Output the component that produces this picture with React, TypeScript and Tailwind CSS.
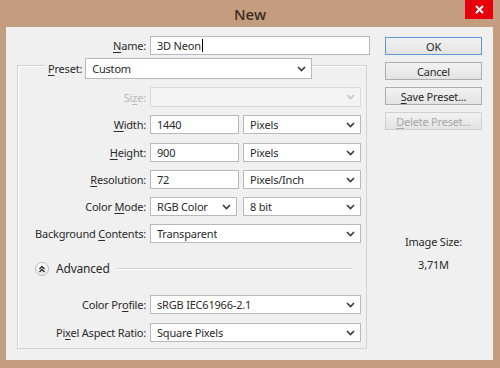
import React from 'react'

const Chevron: React.FC<{ disabled?: boolean }> = ({ disabled }) => (
  <svg width="9" height="6" viewBox="0 0 9 6" className="shrink-0">
    <polyline
      points="1,1 4.5,4.5 8,1"
      fill="none"
      stroke={disabled ? '#c4c4c4' : '#3a3a3a'}
      strokeWidth="1.6"
    />
  </svg>
)

const Select: React.FC<{ value?: string; w: string; h?: string; disabled?: boolean }> = ({ value, w, h = 'h-[19px]', disabled }) => (
  <div
    className={`${w} ${h} flex items-center justify-between pl-[6px] pr-[5px] border ${
      disabled ? 'border-[#d9d9d9] bg-[#f3f3f3]' : 'border-[#b9b9b9] bg-white'
    }`}
  >
    <span className="truncate leading-[15px]">{value}</span>
    <Chevron disabled={disabled} />
  </div>
)

const TextBox: React.FC<{ value: string; w: string; caret?: boolean }> = ({ value, w, caret }) => (
  <div className={`${w} h-[19px] flex items-center pl-[6px] border border-[#b9b9b9] bg-white`}>
    <span className="leading-[15px]">{value}</span>
    {caret && <span className="ml-[1px] w-px h-[13px] bg-black" />}
  </div>
)

const Label: React.FC<{ children: React.ReactNode; w?: string; dim?: boolean }> = ({ children, w = 'w-[132px]', dim }) => (
  <div className={`${w} shrink-0 text-right pr-[4px] leading-[15px] ${dim ? 'text-[#b8b8b8]' : ''}`}>{children}</div>
)

const U: React.FC<{ children: React.ReactNode }> = ({ children }) => (
  <span className="underline underline-offset-2 decoration-1">{children}</span>
)

const Button: React.FC<{ children: React.ReactNode; primary?: boolean; disabled?: boolean }> = ({ children, primary, disabled }) => (
  <div
    className={`h-[18px] w-[97px] flex items-center justify-center leading-[15px] border bg-gradient-to-b from-[#f2f2f2] to-[#e3e3e3] ${
      primary ? 'border-[#5b9ad6]' : disabled ? 'border-[#d0d0d0] text-[#a8a8a8]' : 'border-[#adadad]'
    }`}
  >
    {children}
  </div>
)

export default function App() {
  return (
    <div className="w-[500px] h-[368px] bg-[#c49c80] flex flex-col font-['Noto_Sans',sans-serif] text-[11px] tracking-[-0.2px] text-[#2a2a2a]">
      {/* title bar */}
      <div className="relative h-[27px] shrink-0 pt-[5px] text-center text-[15px] leading-[18px] tracking-normal font-medium text-[#3a2a1e]">
        New
        <div className="absolute right-[7px] top-0 w-[28px] h-[19px] bg-red-600 flex items-center justify-center">
          <svg width="9" height="9" viewBox="0 0 9 9">
            <path d="M1 1 L8 8 M8 1 L1 8" stroke="white" strokeWidth="2" />
          </svg>
        </div>
      </div>

      {/* client area */}
      <div className="ml-[6px] w-[487px] h-[333px] bg-[#f0f0f0] flex">
        <div className="w-[364px] flex flex-col pt-[9px]">
          <div className="flex items-center">
            <Label w="w-[144px]">
              <U>N</U>ame:
            </Label>
            <TextBox value="3D Neon" w="w-[220px]" caret />
          </div>

          <div className="ml-[11px] mt-[10px] w-[350px] h-[284px] border border-[#d3d3d3] shadow-[inset_1px_1px_0_#ffffff] flex flex-col">
            <div className="-mt-[8px] h-[21px] flex items-center">
              <div className="w-[27px]" />
              <div className="h-full flex items-center bg-[#f0f0f0] pl-[3px] pr-[3px] leading-[15px]">
                <U>P</U>reset:
              </div>
              <Select value="Custom" w="w-[227px]" h="h-[21px]" />
            </div>

            <div className="mt-[8px] flex items-center">
              <Label dim>
                Si<span className="underline underline-offset-2">z</span>e:
              </Label>
              <Select w="w-[211px]" h="h-[20px]" disabled />
            </div>

            <div className="mt-[8px] flex items-center">
              <Label>
                <U>W</U>idth:
              </Label>
              <TextBox value="1440" w="w-[89px]" />
              <div className="ml-[4px]">
                <Select value="Pixels" w="w-[118px]" />
              </div>
            </div>

            <div className="mt-[9px] flex items-center">
              <Label>
                <U>H</U>eight:
              </Label>
              <TextBox value="900" w="w-[89px]" />
              <div className="ml-[4px]">
                <Select value="Pixels" w="w-[118px]" />
              </div>
            </div>

            <div className="mt-[8px] flex items-center">
              <Label>
                <U>R</U>esolution:
              </Label>
              <TextBox value="72" w="w-[89px]" />
              <div className="ml-[4px]">
                <Select value="Pixels/Inch" w="w-[118px]" />
              </div>
            </div>

            <div className="mt-[8px] flex items-center">
              <Label>
                Color <U>M</U>ode:
              </Label>
              <Select value="RGB Color" w="w-[87px]" />
              <div className="ml-[6px]">
                <Select value="8 bit" w="w-[118px]" />
              </div>
            </div>

            <div className="mt-[8px] flex items-center">
              <Label>
                Background <U>C</U>ontents:
              </Label>
              <Select value="Transparent" w="w-[211px]" />
            </div>

            <div className="mt-[19px] h-[14px] flex items-center ml-[17px] mr-[14px]">
              <div className="w-[14px] h-[14px] shrink-0 rounded-full border border-[#bdbdbd] bg-gradient-to-b from-white to-[#e6e6e6] flex items-center justify-center">
                <svg width="8" height="8" viewBox="0 0 8 8">
                  <path d="M1.5 4 L4 1.5 L6.5 4 M1.5 7 L4 4.5 L6.5 7" fill="none" stroke="#2a2a2a" strokeWidth="1.3" />
                </svg>
              </div>
              <span className="ml-[7px] text-[12px] leading-[14px]">Advanced</span>
              <div className="ml-[6px] flex-1 h-[2px] border-t border-[#d3d3d3] bg-white" />
            </div>

            <div className="mt-[19px] flex items-center">
              <Label>
                Color Pr<U>o</U>file:
              </Label>
              <Select value="sRGB IEC61966-2.1" w="w-[211px]" />
            </div>

            <div className="mt-[9px] flex items-center">
              <Label>
                Pi<U>x</U>el Aspect Ratio:
              </Label>
              <Select value="Square Pixels" w="w-[211px]" />
            </div>
          </div>
        </div>

        <div className="ml-[15px] w-[97px] pt-[10px] flex flex-col">
          <div className="flex flex-col gap-[7px]">
            <Button primary>OK</Button>
            <Button>Cancel</Button>
            <Button>
              <U>S</U>ave Preset...
            </Button>
            <Button disabled>
              <U>D</U>elete Preset...
            </Button>
          </div>
          <div className="mt-[104px] text-center leading-[15px]">Image Size:</div>
          <div className="mt-[8px] text-center leading-[15px]">3,71M</div>
        </div>
      </div>
    </div>
  )
}
